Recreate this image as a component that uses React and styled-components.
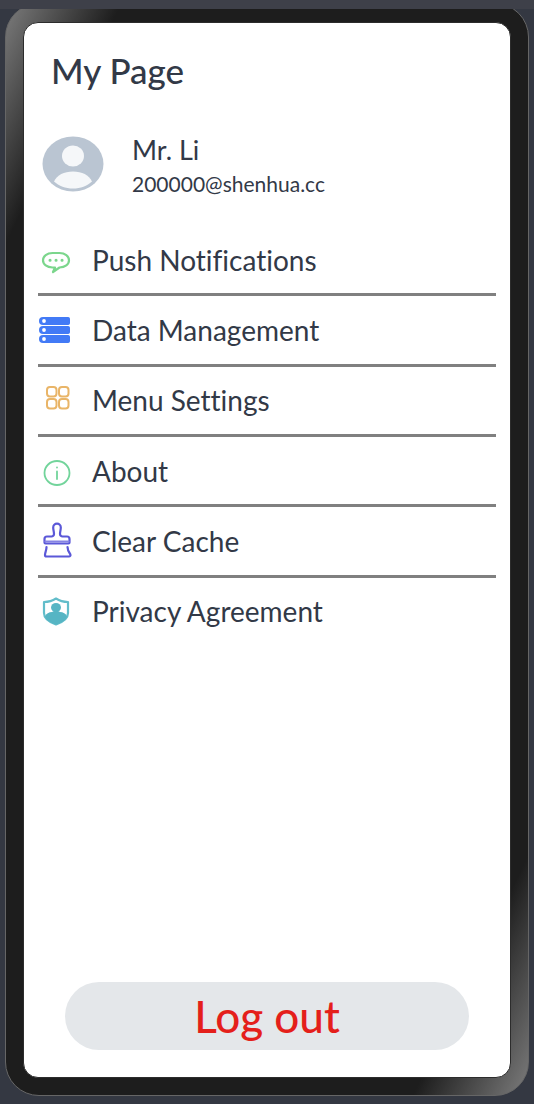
import React from "react";
import styled, { createGlobalStyle } from "styled-components";

const GlobalStyle = createGlobalStyle`
  *, *::before, *::after { box-sizing: border-box; }
  body {
    margin: 0;
    background: #343842;
    color: #323947;
    font-family: Lato, "Liberation Sans", sans-serif;
    font-variant-ligatures: none;
  }
`;

const Page = styled.div`
  display: flex;
  flex-direction: column;
  min-height: 100vh;
`;

const TopStrip = styled.div`
  position: relative;
  z-index: 1;
  height: 9px;
  background: #3e4049;
`;

const Device = styled.div`
  flex: 1;
  display: flex;
  margin: -6px 5px 8px;
  padding: 18px 17px 17px;
  border: 1px solid #666;
  border-radius: 34px;
  background: linear-gradient(
    to bottom right,
    #7c7c7c 0%,
    #1d1d1d 11%,
    #1d1d1d 89%,
    #7c7c7c 100%
  );
`;

const Screen = styled.main`
  flex: 1;
  display: flex;
  flex-direction: column;
  min-width: 0;
  padding: 27px 14px;
  border: 1px solid #2c2c2c;
  border-radius: 15px;
  background: #fff;
`;

const Title = styled.h1`
  margin: 0 13px;
  font-size: 35px;
  font-weight: 500;
  line-height: 40px;
`;

const Profile = styled.section`
  display: flex;
  align-items: center;
  gap: 28px;
  margin: 40px 4px 0;
`;

const ProfileText = styled.div`
  display: flex;
  flex-direction: column;
  padding-top: 2px;
  gap: 2px;
`;

const Name = styled.h2`
  margin: 0;
  font-size: 27px;
  font-weight: 400;
  line-height: 36px;
`;

const Email = styled.p`
  margin: 0;
  font-size: 21px;
  line-height: 28px;
`;

const Menu = styled.ul`
  display: grid;
  grid-auto-rows: 1fr;
  height: 422px;
  margin: 28px 0 0;
  padding: 0;
  list-style: none;
`;

const MenuItem = styled.li`
  display: flex;
  border-bottom: 3px solid #808080;

  &:last-child {
    border-color: transparent;
  }
`;

const MenuButton = styled.button`
  flex: 1;
  display: flex;
  align-items: center;
  gap: 18px;
  padding: 0;
  border: 0;
  background: none;
  color: inherit;
  font: inherit;
  font-size: 28px;
  line-height: 36px;
  text-align: left;
  cursor: pointer;
`;

const Icon = styled.svg`
  flex: none;
  width: 36px;
  height: 40px;
  fill: none;
  stroke-linecap: round;
  stroke-linejoin: round;
`;

const Avatar = styled.svg`
  flex: none;
  width: 62px;
  height: 56px;
`;

const LogoutButton = styled.button`
  height: 68px;
  margin: auto 27px 0;
  padding: 0;
  border: 0;
  border-radius: 34px;
  background: #e4e7ea;
  color: #e41f1b;
  font: inherit;
  font-size: 44px;
  font-weight: 500;
  line-height: 48px;
  cursor: pointer;
`;

const MessageIcon = () => (
  <Icon viewBox="0 0 36 40" stroke="#7bd68c" strokeWidth="2.200" aria-hidden="true">
    <path d="M17 27.500H14.500C9 27.500 5 24.500 5 20.300C5 16 9 13 14.500 13H21.500C27 13 31 16 31 20.300C31 24.500 27 27.500 21.500 27.500L15 32Z" />
    <path d="M12 20.300h.1M18 20.300h.1M24 20.300h.1" strokeWidth="3" />
  </Icon>
);

const DatabaseIcon = () => (
  <Icon viewBox="0 0 36 40" aria-hidden="true">
    {[7, 16, 25].map((y) => (
      <g key={y}>
        <rect x="1" y={y} width="31" height="8" rx="4" fill="#427af6" />
        <rect x="20" y={y} width="12" height="8" rx="2" fill="#427af6" />
        <circle cx="6" cy={y + 4} r="1.900" fill="#fff" />
      </g>
    ))}
  </Icon>
);

const GridIcon = () => (
  <Icon viewBox="0 0 36 40" stroke="#e9b568" strokeWidth="2" aria-hidden="true">
    <rect x="9" y="7" width="9.500" height="9.500" rx="3" />
    <rect x="21" y="7" width="9.500" height="9.500" rx="3" />
    <rect x="9" y="19" width="9.500" height="9.500" rx="3" />
    <rect x="21" y="19" width="9.500" height="9.500" rx="3" />
  </Icon>
);

const InfoIcon = () => (
  <Icon viewBox="0 0 36 40" stroke="#72d49b" strokeWidth="1.800" aria-hidden="true">
    <ellipse cx="19" cy="22" rx="12.500" ry="12" />
    <path d="M19 20.500v7.500M19 16.500v.1" />
  </Icon>
);

const BrushIcon = () => (
  <Icon viewBox="0 0 36 40" stroke="#5b58d8" strokeWidth="2.200" aria-hidden="true">
    <path d="M7.500 22.500a1 1 0 0 1-1-1V18a2.500 2.500 0 0 1 2.500-2.500h4.500a2.500 2.500 0 0 0 2.500-2.500c0-2.500-.8-4-.8-6.500a3.800 3.800 0 0 1 7.600 0c0 2.500-.8 4-.8 6.500a2.500 2.500 0 0 0 2.500 2.500H29a2.500 2.500 0 0 1 2.500 2.500v3.500a1 1 0 0 1-1 1Z" />
    <path d="M7.500 20.500h23" stroke="#8583e4" />
    <path d="M8.500 26c0 4-1.500 5-1.500 8a1.500 1.500 0 0 0 1.500 1.500h22.500a1.500 1.500 0 0 0 1.400-2C30.500 31 29.500 29 29.500 26" />
  </Icon>
);

const ShieldIcon = () => (
  <Icon viewBox="0 0 36 40" aria-hidden="true">
    <path
      d="M18 7.500C21 9.500 25 11 30 11v11c0 6-5 9-12 11.500C11 31 6 28 6 22V11c5 0 9-1.500 12-3.500Z"
      stroke="#62bdca"
      strokeWidth="2.200"
    />
    <ellipse cx="18" cy="16.500" rx="5" ry="4.500" fill="#56b5c4" />
    <path d="M7 25.500c1-3 4-4.500 7-4.500l2-1h4l2 1c3 0 6 1.500 7 4.500-1.500 4-6 6.500-11 8-5-1.500-9.500-4-11-8Z" fill="#56b5c4" />
  </Icon>
);

const AvatarPicture = () => (
  <Avatar viewBox="0 0 62 56" role="img" aria-label="Profile picture">
    <ellipse cx="31" cy="28" rx="30.500" ry="27.500" fill="#bac5d2" />
    <ellipse cx="31" cy="20" rx="11" ry="10.500" fill="#f5f7f9" />
    <path d="M12 45.500C15 39 22 35.500 31 35.500S47 39 50 45.500C45 50 38.500 52.500 31 52.500S17 50 12 45.500Z" fill="#f5f7f9" />
  </Avatar>
);

const items = [
  { label: "Push Notifications", Glyph: MessageIcon },
  { label: "Data Management", Glyph: DatabaseIcon },
  { label: "Menu Settings", Glyph: GridIcon },
  { label: "About", Glyph: InfoIcon },
  { label: "Clear Cache", Glyph: BrushIcon },
  { label: "Privacy Agreement", Glyph: ShieldIcon },
];

export default function App() {
  return (
    <Page>
      <GlobalStyle />
      <TopStrip />
      <Device>
        <Screen>
          <Title>My Page</Title>
          <Profile>
            <AvatarPicture />
            <ProfileText>
              <Name>Mr. Li</Name>
              <Email>200000@shenhua.cc</Email>
            </ProfileText>
          </Profile>
          <Menu>
            {items.map(({ label, Glyph }) => (
              <MenuItem key={label}>
                <MenuButton type="button">
                  <Glyph />
                  {label}
                </MenuButton>
              </MenuItem>
            ))}
          </Menu>
          <LogoutButton type="button">Log out</LogoutButton>
        </Screen>
      </Device>
    </Page>
  );
}
